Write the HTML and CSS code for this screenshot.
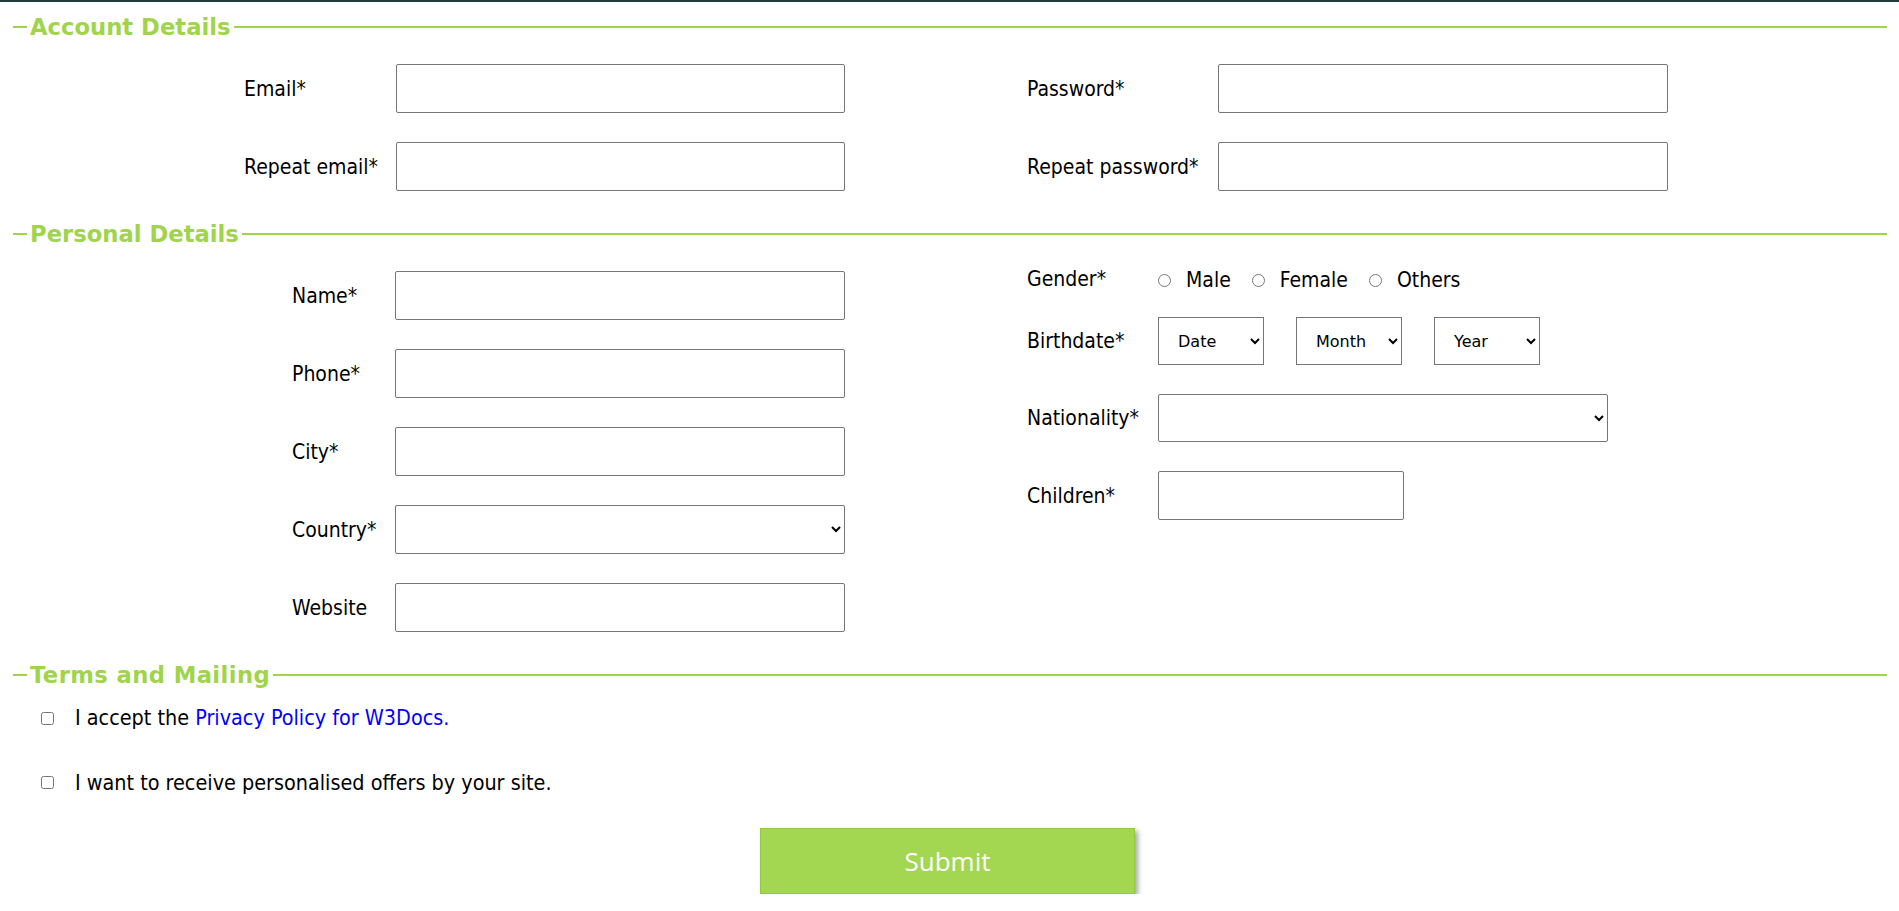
FILE: index.html
```html
<!DOCTYPE html>
<html lang="en">
<head>
<meta charset="utf-8">
<title>Registration form</title>
<link rel="stylesheet" href="styles.css">
</head>
<body>
<div class="topbar"></div>
<form class="form">
  <section class="group">
    <h2 class="group-title"><span>Account Details</span></h2>
    <div class="cols">
      <div class="col col-left">
        <div class="grid grid-acc-left">
          <label class="lbl" for="email">Email*</label>
          <input class="field" id="email" type="email">
          <label class="lbl" for="email2">Repeat email*</label>
          <input class="field" id="email2" type="email">
        </div>
      </div>
      <div class="col col-right">
        <div class="grid grid-acc-right">
          <label class="lbl" for="pw">Password*</label>
          <input class="field" id="pw" type="password">
          <label class="lbl" for="pw2">Repeat password*</label>
          <input class="field" id="pw2" type="password">
        </div>
      </div>
    </div>
  </section>

  <section class="group">
    <h2 class="group-title"><span>Personal Details</span></h2>
    <div class="cols">
      <div class="col col-left">
        <div class="grid grid-per-left">
          <label class="lbl" for="name">Name*</label>
          <input class="field" id="name" type="text">
          <label class="lbl" for="phone">Phone*</label>
          <input class="field" id="phone" type="text">
          <label class="lbl" for="city">City*</label>
          <input class="field" id="city" type="text">
          <label class="lbl" for="country">Country*</label>
          <select class="field sel" id="country"><option></option></select>
          <label class="lbl" for="web">Website</label>
          <input class="field" id="web" type="text">
        </div>
      </div>
      <div class="col col-right">
        <div class="grid grid-per-right">
          <span class="lbl lbl-short">Gender*</span>
          <div class="radios">
            <label class="radio"><input type="radio" name="g"><span>Male</span></label>
            <label class="radio"><input type="radio" name="g"><span>Female</span></label>
            <label class="radio"><input type="radio" name="g"><span>Others</span></label>
          </div>
          <span class="lbl">Birthdate*</span>
          <div class="dates">
            <select class="small-sel"><option>Date</option></select>
            <select class="small-sel"><option>Month</option></select>
            <select class="small-sel"><option>Year</option></select>
          </div>
          <label class="lbl" for="nat">Nationality*</label>
          <select class="field sel" id="nat"><option></option></select>
          <label class="lbl" for="kids">Children*</label>
          <input class="field field-short" id="kids" type="text">
        </div>
      </div>
    </div>
  </section>

  <section class="group group-terms">
    <h2 class="group-title"><span>Terms and Mailing</span></h2>
    <div class="checks">
      <label class="check"><input type="checkbox"><span>I accept the <a href="#" class="link">Privacy Policy for W3Docs.</a></span></label>
      <label class="check"><input type="checkbox"><span>I want to receive personalised offers by your site.</span></label>
    </div>
    <div class="actions">
      <button type="submit" class="submit">Submit</button>
    </div>
  </section>
</form>
</body>
</html>
```

FILE: styles.css
```css
* { box-sizing: border-box; }

html, body {
  margin: 0;
  padding: 0;
  background: #ffffff;
}

body {
  font-family: "DejaVu Sans Condensed", "DejaVu Sans", sans-serif;
  font-stretch: condensed;
  font-size: 21px;
  color: #000;
}

.topbar {
  height: 2px;
  background: #1e3b3a;
}

.form {
  margin: 0 12px 0 13px;
}

.group {
  padding-bottom: 28px;
}

.group-title {
  display: flex;
  align-items: center;
  height: 30px;
  margin: 10px 0 22px;
  font-family: "DejaVu Sans", sans-serif;
  font-stretch: normal;
  font-weight: 700;
  font-size: 22.7px;
  line-height: 30px;
  color: #a0d44b;
}

.group + .group .group-title {
  margin-top: 0;
}

.group-title::before,
.group-title::after {
  content: "";
  height: 2px;
  background: #a0d44b;
}

.group-title::before { width: 14px; }
.group-title::after { flex: 1; }

.group-title span {
  padding: 0 3px;
}

.group-terms .group-title span {
  letter-spacing: 0.4px;
}

.cols {
  display: grid;
  grid-template-columns: 1fr 1fr;
}

.col-left {
  display: flex;
  justify-content: flex-end;
  padding-right: 105px;
}

.col-right {
  display: flex;
  justify-content: flex-start;
  padding-left: 77px;
  align-items: flex-start;
}

.grid {
  display: grid;
  column-gap: 17px;
  row-gap: 29px;
  align-items: center;
}

.grid-acc-left { grid-template-columns: 135px 449px; }
.grid-acc-right { grid-template-columns: 174px 450px; }
.grid-per-left { grid-template-columns: 86px 450px; }
.grid-per-right {
  grid-template-columns: 113px auto;
  grid-template-rows: 17px 48px 48px 49px;
  column-gap: 18px;
  justify-items: start;
}

.lbl {
  line-height: 24px;
  white-space: nowrap;
}

.lbl-short {
  line-height: 17px;
}

.field {
  display: block;
  width: 100%;
  height: 49px;
  margin: 0;
  border: 1px solid #767676;
  border-radius: 2px;
  background: #fff;
  font-family: "DejaVu Sans", sans-serif;
  font-stretch: normal;
  font-size: 16px;
  padding: 0 8px;
}

.sel {
  height: 49px;
  color: #000;
}

#nat {
  width: 450px;
  height: 48px;
}

.field-short {
  width: 246px;
}

.radios {
  display: flex;
  align-items: center;
  height: 17px;
  gap: 21px;
  padding-top: 1px;
}

.radio {
  display: flex;
  align-items: center;
  gap: 15px;
  line-height: 17px;
}

.radio input {
  margin: 0;
  width: 13px;
  height: 13px;
}

.dates {
  display: flex;
  gap: 32px;
}

.small-sel {
  width: 106px;
  height: 48px;
  margin: 0;
  padding: 0 0 0 15px;
  border: 1px solid #767676;
  border-radius: 0;
  background: #fff;
  color: #000;
  font-family: "DejaVu Sans", sans-serif;
  font-stretch: normal;
  font-size: 16px;
}

.group-terms {
  padding-bottom: 0;
}

.group-terms .group-title {
  margin-bottom: 16px;
}

.checks {
  display: flex;
  flex-direction: column;
  gap: 40.5px;
  padding-left: 28px;
}

.check {
  display: flex;
  align-items: center;
  gap: 21px;
  height: 24px;
  line-height: 24px;
  font-size: 21.4px;
}

.check input {
  margin: 0;
  width: 13px;
  height: 13px;
}

.link {
  color: #0000ff;
  text-decoration: none;
}

.actions {
  display: flex;
  justify-content: center;
  padding-top: 33.5px;
  padding-right: 5px;
}

.submit {
  width: 375px;
  height: 66px;
  border: 1px solid #93c93e;
  background: #a3d651;
  color: #fff;
  font-family: "Open Sans", sans-serif;
  font-size: 26px;
  box-shadow: 3px 3px 5px rgba(0, 0, 0, 0.35);
  cursor: pointer;
}
```
